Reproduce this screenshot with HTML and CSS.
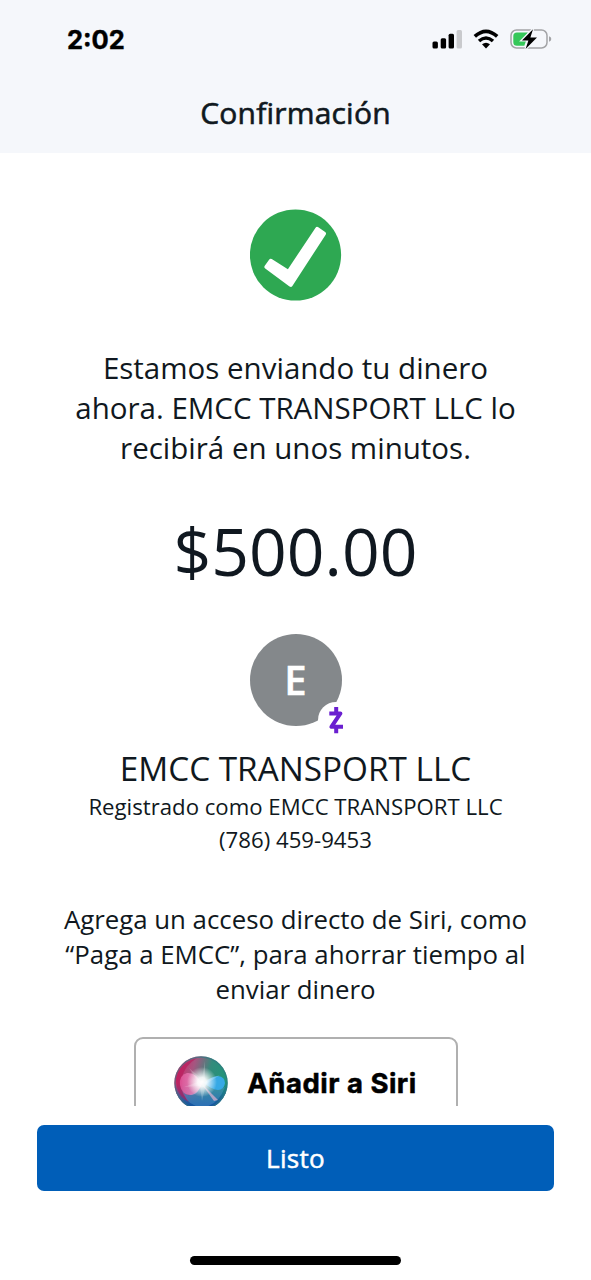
FILE: index.html
```
<!DOCTYPE html>
<html lang="es">
<head>
	<meta charset="UTF-8">
	<meta name="viewport" content="width=device-width, initial-scale=1.0">
	<title>Confirmación</title>
	<link rel="stylesheet" href="styles.css">
</head>
<body>

	<header>
		<div class="status-bar">
			<span class="time">2:02</span>
			<svg class="status-icons" width="122" height="24" viewBox="0 0 122 24">
				<!-- Señal -->
				<rect x="2.5" y="14.5" width="5.4" height="7" rx="1.5"/>
				<rect x="10.7" y="11.2" width="5.4" height="10.3" rx="1.5"/>
				<rect x="18.6" y="6.8" width="5.4" height="14.7" rx="1.5"/>
				<rect x="26.6" y="3" width="5.4" height="18.5" rx="1.5" fill="#c9cacd"/>
				<!-- Wifi -->
				<g fill="none" stroke="#000" stroke-width="3.6">
					<path d="M44.8 9.4Q56 -0.8 67.2 9.4"/>
					<path d="M49 14Q56 8 63 14"/>
				</g>
				<path d="M52 17.3Q56 14 60 17.3L56 21.5Z"/>
				<!-- Batería -->
				<rect x="81" y="3" width="36" height="18" rx="5.5" fill="none" stroke="#a3a4a7" stroke-width="1.5"/>
				<path d="M119 9.2Q121.3 10 121.3 12Q121.3 14 119 14.8Z" fill="#a3a4a7"/>
				<path d="M87 5.5H98L91.5 14H96L94.3 18.8H87Q83.3 18.8 83.3 15.2V9Q83.3 5.5 87 5.5Z" fill="#35c759"/>
				<path d="M103 2.2L92 13.4H98.4L95.6 22L107 10.6H100.4Z" stroke="#f5f7fb" stroke-width="2.4" paint-order="stroke"/>
			</svg>
		</div>
		<h1>Confirmación</h1>
	</header>

	<main>
		<svg class="check" width="92" height="92" viewBox="0 0 92 92">
			<circle cx="45.5" cy="46" r="45.6" fill="#2ea852"/>
			<path d="M20.7 51.8L38.4 63L67.2 19.9L74 24.6L40.7 75.8L16.4 57.9Z" fill="#fff" stroke="#fff" stroke-width="4" stroke-linejoin="round"/>
		</svg>

		<p class="message">Estamos enviando tu dinero<br>ahora. EMCC TRANSPORT LLC lo<br>recibirá en unos minutos.</p>
		<div class="amount">$500.00</div>

		<div class="avatar">
			<span>E</span>
			<svg class="zelle" width="36" height="36" viewBox="0 0 36 36">
				<circle cx="18" cy="18" r="18" fill="#fff"/>
				<g fill="none" stroke="#6a1fd0" stroke-width="4">
					<path d="M11.3 11.4H22.4L13.4 24.8H25" stroke-linejoin="round"/>
					<path d="M18.2 5V11M18.2 25V31.2"/>
				</g>
			</svg>
		</div>

		<h2>EMCC TRANSPORT LLC</h2>
		<p class="details">Registrado como EMCC TRANSPORT LLC<br>(786) 459-9453</p>
		<p class="siri-info">Agrega un acceso directo de Siri, como<br>“Paga a EMCC”, para ahorrar tiempo al<br>enviar dinero</p>

		<div class="siri-button">
			<svg width="54" height="54" viewBox="0 0 54 54">
				<defs>
					<linearGradient id="orb" x1="0" y1="0.3" x2="1" y2="0.6">
						<stop offset="0" stop-color="#d52669"/>
						<stop offset="0.3" stop-color="#a75580"/>
						<stop offset="0.6" stop-color="#348b7c"/>
						<stop offset="1" stop-color="#1b9878"/>
					</linearGradient>
					<linearGradient id="depth" x1="0" y1="0" x2="0" y2="1">
						<stop offset="0.5" stop-color="#1656a0" stop-opacity="0"/>
						<stop offset="0.9" stop-color="#1656a0"/>
					</linearGradient>
					<linearGradient id="lobe" x1="0" y1="0" x2="1" y2="0">
						<stop offset="0" stop-color="#e0559a"/>
						<stop offset="1" stop-color="#f2a5cf"/>
					</linearGradient>
					<radialGradient id="glow">
						<stop offset="0" stop-color="#fff"/>
						<stop offset="0.3" stop-color="#fff" stop-opacity="0.9"/>
						<stop offset="1" stop-color="#fff" stop-opacity="0"/>
					</radialGradient>
				</defs>
				<circle cx="27" cy="27" r="26.7" fill="url(#orb)"/>
				<circle cx="27" cy="27" r="26.7" fill="url(#depth)"/>
				<path d="M2 22Q6 6 23 2Q10 10 8 22Q7 36 15 46Q2 40 2 22Z" fill="#b81858" opacity="0.6"/>
				<path d="M28 28Q22 16 13 17Q5 19 6 29Q8 40 18 39Q24 38 28 28Z" fill="url(#lobe)" opacity="0.85"/>
				<path d="M7 32Q11 42 19 38Q27 34 29 27Q39 37 51 31Q43 52 26 51Q12 49 7 32Z" fill="#5ba7db" opacity="0.35"/>
				<path d="M30 27Q38 20 44 20Q51 21 51 27Q50 34 44 34Q38 34 30 27Z" fill="#36a9e5"/>
				<path d="M27 27L44 44L40 45Z" fill="#edb5d1" opacity="0.65"/>
				<path d="M15 12L28 23L31 5L31 24L46 19L32 28L28 45L26 30L10 31L24 26Z" fill="#fff" opacity="0.2"/>
				<circle cx="28" cy="26" r="15" fill="url(#glow)"/>
				<circle cx="27" cy="27" r="26" fill="none" stroke="#327783" stroke-width="1.3" opacity="0.65"/>
			</svg>
			<span>Añadir a Siri</span>
		</div>
	</main>

	<footer>
		<button type="button">Listo</button>
		<div class="home-indicator"></div>
	</footer>

</body>
</html>
```
FILE: styles.css
```
* {
	box-sizing: border-box;
}
body {
	margin: 0;
	height: 1280px;
	display: flex;
	flex-direction: column;
	font-family: "Open Sans", sans-serif;
	color: #101820;
	background-color: #fff;
	overflow: hidden;
}
header {
	height: 153px;
	background-color: #f5f7fb;
	text-align: center;
}
.status-bar {
	height: 93px;
	padding: 27px 39px 0 67px;
	display: flex;
	justify-content: space-between;
	align-items: flex-start;
}
.time {
	font-family: Inter, sans-serif;
	font-size: 25.5px;
	font-weight: 700;
	line-height: 26px;
	-webkit-text-stroke: 0.4px;
	color: #000;
}
h1, h2, p {
	margin: 0;
	font-weight: 400;
}
h1 {
	font-size: 30px;
	letter-spacing: 0.2px;
	line-height: 40px;
	-webkit-text-stroke: 0.6px;
}
main {
	height: 953px;
	padding-top: 56px;
	display: flex;
	flex-direction: column;
	align-items: center;
	text-align: center;
	overflow: hidden;
}
main > * {
	flex-shrink: 0;
}
.message {
	margin-top: 47px;
	font-size: 29.5px;
	line-height: 40px;
}
.amount {
	margin-top: 37px;
	font-size: 66px;
	line-height: 90px;
}
.avatar {
	position: relative;
	width: 92px;
	height: 92px;
	margin-top: 39px;
	border-radius: 50%;
	background-color: #84888b;
	color: #fff;
	font-size: 40px;
	font-weight: 600;
	line-height: 92px;
	-webkit-text-stroke: 0.5px;
}
.zelle {
	position: absolute;
	left: 68px;
	top: 68px;
}
h2 {
	margin-top: 20px;
	font-size: 33.3px;
	line-height: 44px;
}
.details {
	font-size: 22.2px;
	line-height: 33px;
}
.siri-info {
	margin-top: 46px;
	font-size: 25.8px;
	line-height: 35px;
}
.siri-button {
	width: 324px;
	height: 92px;
	margin-top: 30px;
	display: flex;
	justify-content: center;
	align-items: center;
	gap: 19px;
	border: 2px solid #b0b0b0;
	border-radius: 9px;
	font-family: Inter, sans-serif;
	font-size: 27.5px;
	font-weight: 700;
	letter-spacing: 0.5px;
	-webkit-text-stroke: 0.5px;
	color: #000;
}
.siri-button span {
	white-space: nowrap;
}
footer {
	padding: 19px 37px 0;
}
button {
	display: block;
	width: 517px;
	height: 66px;
	padding: 0;
	border: 0;
	border-radius: 7px;
	background-color: #005eb8;
	color: #fff;
	font-family: inherit;
	font-size: 26px;
	letter-spacing: 0.3px;
	-webkit-text-stroke: 0.5px;
}
.home-indicator {
	width: 211px;
	height: 9px;
	margin: 65px auto 0;
	border-radius: 5px;
	background-color: #000;
}
```
